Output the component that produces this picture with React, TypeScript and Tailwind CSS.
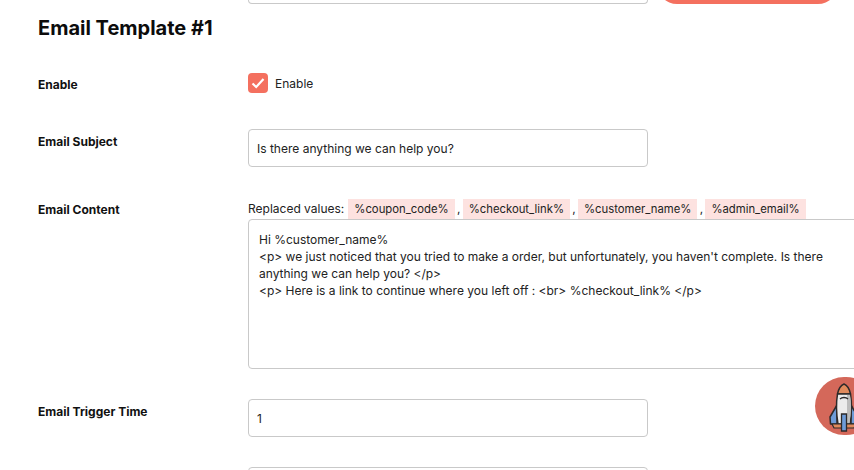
import React from 'react';

const emailBody = `Hi %customer_name%
<p> we just noticed that you tried to make a order, but unfortunately, you haven't complete. Is there anything we can help you? </p>
<p> Here is a link to continue where you left off : <br> %checkout_link% </p>`;

const tokens = ['%coupon_code%', '%checkout_link%', '%customer_name%', '%admin_email%'];

function Label({ children, className = '' }: { children: React.ReactNode; className?: string }) {
  return <div className={`w-[210px] shrink-0 text-[12px] leading-[16px] font-bold text-[#111] ${className}`}>{children}</div>;
}

function Rocket() {
  return (
    <svg viewBox="0 0 32 50" className="w-[32px] h-[50px] mr-[2px] mt-[4px] shrink-0">
      <path d="M9 22 L2 34 L2.500 41 H9 Z" fill="#6d9bd8" stroke="#2d2a2a" strokeWidth="1.5" strokeLinejoin="round" />
      <path d="M23 22 L30 34 L29.500 41 H23 Z" fill="#6d9bd8" stroke="#2d2a2a" strokeWidth="1.5" strokeLinejoin="round" />
      <path d="M9.500 11 C10.500 6 13.500 2 16 1 C18.500 2 21.500 6 22.500 11 Z" fill="#e08a5c" stroke="#2d2a2a" strokeWidth="1.5" strokeLinejoin="round" />
      <path d="M9.500 11 H22.500 C24 20 23.500 32 22 41 H10 C8.500 32 8 20 9.500 11 Z" fill="#ececec" stroke="#2d2a2a" strokeWidth="1.5" strokeLinejoin="round" />
      <path d="M19 12 H22 C23.300 20 23 32 21.500 40 H19 Z" fill="#bdbdbd" />
      <path d="M12 16 C14 14 18 14 20 16" fill="none" stroke="#2d2a2a" strokeWidth="1.3" />
      <path d="M4 41 H28 L26 45 H6 Z" fill="#e08a5c" stroke="#2d2a2a" strokeWidth="1.2" strokeLinejoin="round" />
      <path d="M13.500 31 H18.500 V48 H13.500 Z" fill="#6d9bd8" stroke="#2d2a2a" strokeWidth="1.3" />
    </svg>
  );
}

export default function App() {
  return (
    <div className="relative w-[854px] h-[470px] overflow-hidden bg-white font-['Inter',sans-serif] text-[12px] text-[#222]">
      {/* cut off row on top */}
      <div className="flex h-[4px] pl-[248px]">
        <div className="w-[400px] h-[4px] border border-t-0 border-[#c9c9c9] rounded-b-[4px]" />
        <div className="ml-[9px] w-[181px] h-[4px] overflow-hidden flex items-end">
          <div className="w-full h-[40px] shrink-0 bg-[#f4705f] rounded-[20px]" />
        </div>
      </div>

      <div className="pl-[38px] pt-[11px]">
        <h2 className="text-[20px] leading-[26px] font-bold text-[#0c0c0c]">Email Template #1</h2>

        {/* Enable */}
        <div className="flex mt-[32px] h-[20px]">
          <Label className="pt-[4px]">Enable</Label>
          <label className="flex items-center gap-[7px]">
            <span className="w-[20px] h-[20px] rounded-[4px] bg-[#f4705f] flex items-center justify-center">
              <svg viewBox="0 0 14 14" className="w-[14px] h-[14px]">
                <path d="M1.500 7.500 L5.200 11 L12.500 3" fill="none" stroke="white" strokeWidth="2.200" />
              </svg>
            </span>
            <span className="pt-[1px]">Enable</span>
          </label>
        </div>

        {/* Subject */}
        <div className="flex mt-[36px]">
          <Label className="pt-[5px]">Email Subject</Label>
          <input
            readOnly
            value="Is there anything we can help you?"
            className="w-[400px] h-[38px] px-[8px] border border-[#c9c9c9] rounded-[4px] outline-none text-[12px] text-[#222]"
          />
        </div>

        {/* Content */}
        <div className="flex mt-[32px]">
          <Label className="pt-[3px]">Email Content</Label>
          <div className="shrink-0">
            <div className="flex items-center h-[20px] whitespace-nowrap">
              <span className="mr-[4px]">Replaced values:</span>
              {tokens.map((t, i) => (
                <React.Fragment key={t}>
                  <span className="bg-[#fde2e0] h-[20px] leading-[20px] px-[6px] text-[11.3px]">{t}</span>
                  {i < tokens.length - 1 && <span className="w-[8px] text-center">,</span>}
                </React.Fragment>
              ))}
            </div>
            <textarea
              readOnly
              value={emailBody}
              className="block w-[640px] h-[150px] pl-[10px] pr-[60px] pt-[11px] pb-[9px] border border-[#c9c9c9] rounded-[4px] outline-none resize-none text-[12px] leading-[17px] text-[#222]"
            />
          </div>
        </div>

        {/* Trigger time */}
        <div className="flex mt-[30px]">
          <Label className="pt-[5px]">Email Trigger Time</Label>
          <input
            readOnly
            value="1"
            className="w-[400px] h-[38px] px-[8px] border border-[#c9c9c9] rounded-[4px] outline-none text-[12px] text-[#222]"
          />
        </div>

        {/* next field, cut off by the window */}
        <div className="flex mt-[30px]">
          <Label>{''}</Label>
          <div className="w-[400px] h-[38px] border border-[#c9c9c9] rounded-[4px]" />
        </div>
      </div>

      {/* floating launcher */}
      <div className="absolute left-[815px] top-[377px] w-[60px] h-[58px] rounded-full bg-[#d4685a] flex items-center justify-center">
        <Rocket />
      </div>
    </div>
  );
}
